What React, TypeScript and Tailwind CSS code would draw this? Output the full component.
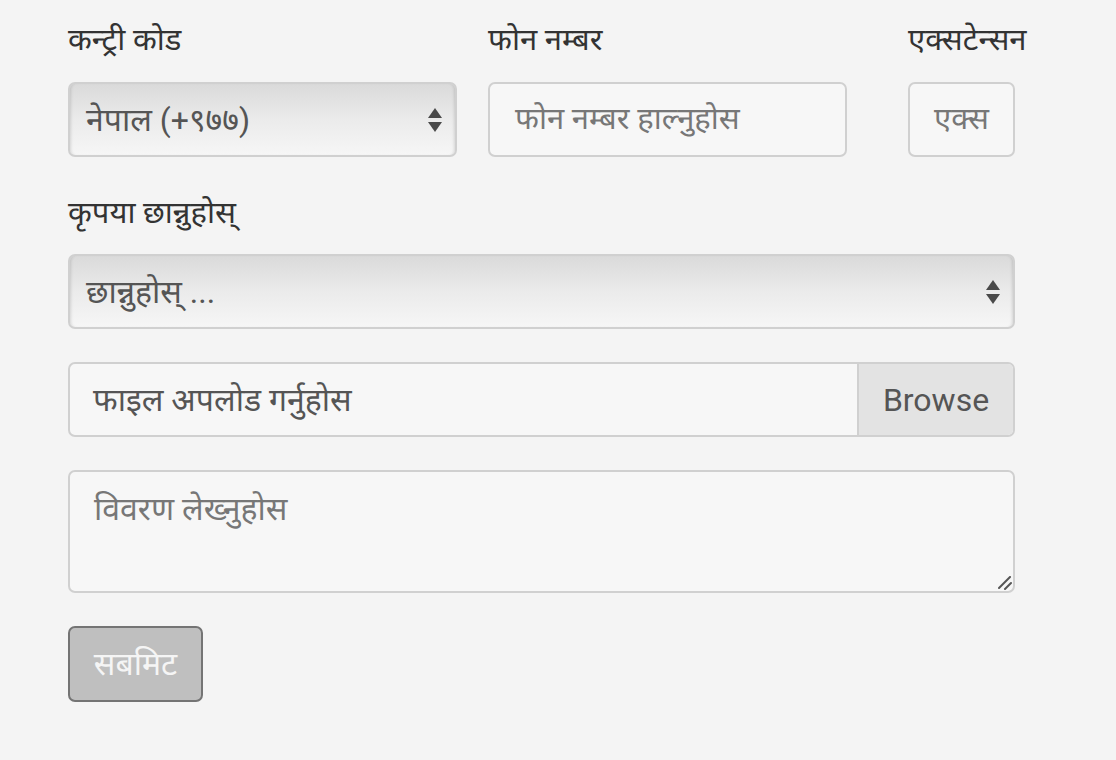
import React from 'react';

const font = "font-['Roboto','Noto_Sans_Devanagari','Noto_Sans',sans-serif]";

const SelectArrows = () => (
  <svg width="16" height="28" viewBox="0 0 16 28" className="pointer-events-none">
    <path d="M8 2 L15 12 L1 12 Z" fill="#4a4a4a" />
    <path d="M1 16 L15 16 L8 26 Z" fill="#4a4a4a" />
  </svg>
);

const NativeSelect = ({ value, className }: { value: string; className: string }) => (
  <div
    className={`relative flex items-center h-[75px] rounded-[7px] border-2 border-[#d0d0d0] bg-gradient-to-b from-[#dadada] via-[#ebebeb] to-[#f6f6f6] shadow-[inset_3px_0_3px_-2px_rgba(0,0,0,0.12),inset_-3px_0_3px_-2px_rgba(0,0,0,0.12)] ${className}`}
  >
    <span className="pl-[16px] text-[32px] text-[#555] leading-none">{value}</span>
    <div className="ml-auto mr-[12px] flex items-center">
      <SelectArrows />
    </div>
  </div>
);

const Label = ({ children, className = '' }: { children: React.ReactNode; className?: string }) => (
  <div className={`h-[40px] flex items-center text-[31px] font-normal text-[#333] whitespace-nowrap ${className}`}>
    {children}
  </div>
);

export default function App() {
  return (
    <div className={`min-h-screen bg-[#f4f4f4] ${font}`}>
      <div className="pl-[68px] pt-[20px] w-[1015px]">
        {/* Row 1 */}
        <div className="flex">
          <div className="w-[389px]">
            <Label>कन्ट्री कोड</Label>
            <NativeSelect value="नेपाल (+९७७)" className="mt-[22px] w-[389px]" />
          </div>
          <div className="ml-[31px] w-[359px]">
            <Label>फोन नम्बर</Label>
            <div className="mt-[22px] h-[75px] rounded-[7px] border-2 border-[#d0d0d0] bg-[#f7f7f7] flex items-center pl-[25px] text-[31px] text-[#777]">
              फोन नम्बर हाल्नुहोस
            </div>
          </div>
          <div className="ml-[61px] w-[107px]">
            <Label>एक्सटेन्सन</Label>
            <div className="mt-[22px] h-[75px] rounded-[7px] border-2 border-[#d0d0d0] bg-[#f7f7f7] flex items-center justify-center text-[31px] text-[#777]">
              एक्स
            </div>
          </div>
        </div>

        {/* Row 2 */}
        <Label className="mt-[36px]">कृपया छान्नुहोस्</Label>
        <NativeSelect value="छान्नुहोस् ..." className="mt-[21px] w-full" />

        {/* File upload */}
        <div className="mt-[33px] flex h-[75px] rounded-[7px] border-2 border-[#d0d0d0] bg-[#f7f7f7] overflow-hidden">
          <div className="flex-1 flex items-center pl-[23px] text-[32px] text-[#555]">फाइल अपलोड गर्नुहोस</div>
          <div className="w-[156px] flex items-center justify-center border-l-2 border-[#d0d0d0] bg-[#e3e3e3] text-[32px] text-[#555]">
            Browse
          </div>
        </div>

        {/* Textarea */}
        <div className="relative mt-[33px]">
          <textarea
            placeholder="विवरण लेख्नुहोस"
            className="block w-full h-[123px] resize-none rounded-[7px] border-2 border-[#d0d0d0] bg-[#f7f7f7] px-[24px] py-[13px] text-[32px] text-[#555] placeholder:text-[#777] outline-none"
          />
          <svg width="14" height="14" viewBox="0 0 14 14" className="absolute right-[3px] bottom-[3px] pointer-events-none">
            <path d="M1 12 L12 1" stroke="#555" strokeWidth="2" strokeLinecap="round" />
            <path d="M7 13 L13 7" stroke="#555" strokeWidth="2" strokeLinecap="round" />
          </svg>
        </div>

        {/* Submit */}
        <button className="mt-[33px] w-[135px] h-[76px] rounded-[7px] border-2 border-[#747474] bg-[#bfbfbf] text-[32px] text-[#f5f5f5]">
          सबमिट
        </button>
      </div>
    </div>
  );
}
